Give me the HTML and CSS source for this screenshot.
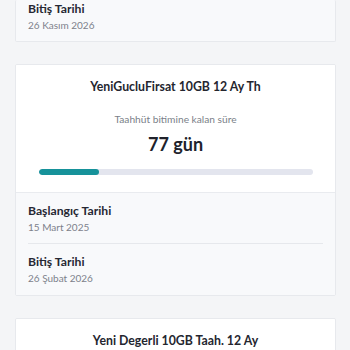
FILE: index.html
```html
<!DOCTYPE html>
<html lang="tr">
<head>
<meta charset="utf-8">
<link rel="stylesheet" href="styles.css">
</head>
<body>
<div class="page">
  <div class="card">
    <div class="details">
      <div class="row row-first">
        <div class="label">Bitiş Tarihi</div>
        <div class="value">26 Kasım 2026</div>
      </div>
    </div>
  </div>

  <div class="card">
    <div class="head">
      <div class="title">YeniGucluFirsat 10GB 12 Ay Th</div>
      <div class="sub">Taahhüt bitimine kalan süre</div>
      <div class="days">77 gün</div>
      <div class="track"><div class="fill" style="width:22%"></div></div>
    </div>
    <div class="details">
      <div class="row">
        <div class="label">Başlangıç Tarihi</div>
        <div class="value">15 Mart 2025</div>
      </div>
      <div class="row">
        <div class="label">Bitiş Tarihi</div>
        <div class="value">26 Şubat 2026</div>
      </div>
    </div>
  </div>

  <div class="card">
    <div class="head">
      <div class="title">Yeni Degerli 10GB Taah. 12 Ay</div>
    </div>
  </div>
</div>
</body>
</html>
```

FILE: styles.css
```css
html, body {
  margin: 0;
  padding: 0;
  background: #f4f5f7;
  font-family: Lato, "Noto Sans", sans-serif;
}
.page {
  display: flex;
  flex-direction: column;
  gap: 22px;
  padding: 0 14px 0 15px;
}
.card {
  background: #ffffff;
  border: 1px solid #e7e9ed;
  border-radius: 2px;
  overflow: hidden;
}
.card:first-child {
  border-top: none;
}
.head {
  display: flex;
  flex-direction: column;
  align-items: center;
  padding: 13px 0 17px;
  background: #ffffff;
}
.title {
  font-size: 12.3px;
  font-weight: 700;
  line-height: 18px;
  color: #24262f;
}
.sub {
  margin-top: 16px;
  font-size: 10.2px;
  line-height: 14px;
  color: #7b7f89;
}
.days {
  margin-top: 6px;
  font-size: 18px;
  font-weight: 700;
  line-height: 24px;
  color: #20222b;
}
.track {
  margin-top: 13px;
  width: 274px;
  height: 6px;
  border-radius: 3px;
  background: #e3e5ee;
  overflow: hidden;
}
.fill {
  height: 100%;
  border-radius: 3px;
  background: #16929a;
}
.details {
  background: #f8f9fb;
  border-top: 1px solid #e9ebef;
  padding: 0 12px 0 12px;
}
.card:first-child .details {
  border-top: none;
}
.row {
  padding: 9px 0 9px;
}
.row + .row {
  border-top: 1px solid #e6e8ec;
  padding-bottom: 10px;
}
.row-first {
  padding: 0 0 9px;
}
.label {
  font-size: 12.2px;
  font-weight: 700;
  line-height: 18px;
  color: #262833;
}
.value {
  font-size: 10px;
  line-height: 14px;
  color: #7d818b;
}
```
